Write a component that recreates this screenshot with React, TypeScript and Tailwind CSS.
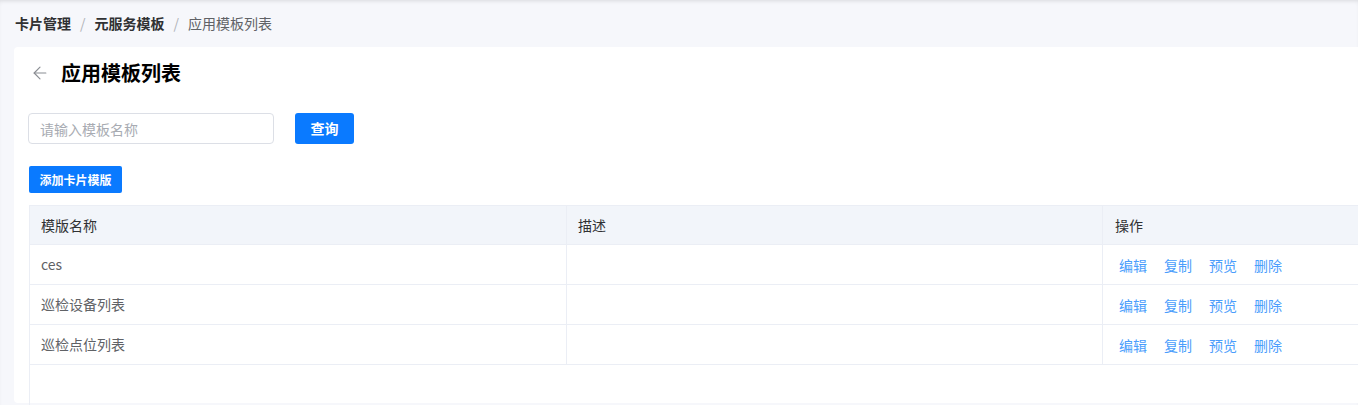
import { ArrowLeft } from "lucide-react"

const rows = [
  { name: "ces", desc: "" },
  { name: "巡检设备列表", desc: "" },
  { name: "巡检点位列表", desc: "" },
]

const actions = ["编辑", "复制", "预览", "删除"]

export default function App() {
  return (
    <div
      className="h-[405px] w-[1358px] overflow-hidden bg-[#f6f7fb] shadow-[inset_0_3px_4px_-2px_rgba(0,0,0,0.12)]"
      style={{ fontFamily: '"Noto Sans CJK SC", "Noto Sans", sans-serif' }}
    >
      <div className="flex h-[47px] items-center gap-[9px] pl-[15px] text-[14px]">
        <span className="font-bold text-[#303133]">卡片管理</span>
        <span className="text-[#b0b3b8]">/</span>
        <span className="font-bold text-[#303133]">元服务模板</span>
        <span className="text-[#b0b3b8]">/</span>
        <span className="text-[#606266]">应用模板列表</span>
      </div>

      <div className="ml-[14px] h-[356px] w-[1640px] rounded-[4px] bg-white pl-[14px] pt-[14px]">
        {/* title */}
        <div className="flex h-[24px] items-center gap-[11px] pl-[2px]">
          <ArrowLeft size={20} strokeWidth={1.4} className="text-[#8a8d93]" />
          <h1 className="text-[20px] font-bold leading-none text-black">应用模板列表</h1>
        </div>

        {/* search */}
        <div className="mt-[28px] flex items-center">
          <input
            placeholder="请输入模板名称"
            className="h-[31px] w-[246px] rounded-[4px] border border-[#dcdfe6] px-[11px] text-[14px] text-[#606266] outline-none placeholder:text-[#a8abb2]"
          />
          <button
            type="button"
            className="ml-[21px] h-[31px] w-[59px] rounded-[3px] bg-[#0a7aff] text-[14px] font-bold text-white"
          >
            查询
          </button>
        </div>

        <button
          type="button"
          className="ml-px mt-[22px] h-[27px] w-[93px] rounded-[2px] bg-[#0a7aff] text-[12px] font-bold text-white"
        >
          添加卡片模版
        </button>

        {/* table */}
        <div className="ml-px mt-[12px] h-[200px] w-[1610px] border-l border-t border-[#ebeef5] text-[14px]">
          <div className="flex h-[39px] items-center border-b border-[#ebeef5] bg-[#f2f5fa] text-[#303133]">
            <div className="flex h-full w-[537px] items-center border-r border-[#ebeef5] pl-[11px]">模版名称</div>
            <div className="flex h-full w-[536px] items-center border-r border-[#ebeef5] pl-[11px]">描述</div>
            <div className="flex h-full flex-1 items-center pl-[12px]">操作</div>
          </div>
          {rows.map((r) => (
            <div key={r.name} className="flex h-[40px] items-center border-b border-[#ebeef5] text-[#606266]">
              <div className="flex h-full w-[537px] items-center border-r border-[#ebeef5] pl-[11px]">{r.name}</div>
              <div className="flex h-full w-[536px] items-center border-r border-[#ebeef5] pl-[11px]">{r.desc}</div>
              <div className="flex h-full flex-1 items-center gap-[17px] pl-[16px] pt-[2px] text-[#4a9dfc]">
                {actions.map((a) => (
                  <span key={a}>{a}</span>
                ))}
              </div>
            </div>
          ))}
        </div>
      </div>
    </div>
  )
}
